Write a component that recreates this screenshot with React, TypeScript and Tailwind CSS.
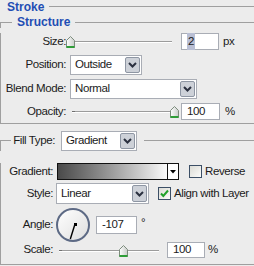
import React from 'react';

const font = { fontFamily: '"Liberation Sans", Arial, sans-serif' };

function Chevron() {
  return (
    <svg width="9" height="6" viewBox="0 0 9 6" fill="none">
      <polyline points="1,1 4.5,4.5 8,1" stroke="#2b3140" strokeWidth="2" />
    </svg>
  );
}

function Thumb() {
  return (
    <svg width="9" height="12" viewBox="0 0 9 12">
      <defs>
        <linearGradient id="thumbFill" x1="0" y1="0" x2="1" y2="0">
          <stop offset="0" stopColor="#ffffff" />
          <stop offset="1" stopColor="#c9cdc9" />
        </linearGradient>
      </defs>
      <path d="M4.5 0.5 L8.5 4.5 V11.5 H0.5 V4.5 Z" fill="url(#thumbFill)" stroke="#7d8c7d" />
      <path d="M0.5 11 H8.5" stroke="#2f9e38" strokeWidth="2" />
    </svg>
  );
}

function Slider({ className, pct }: { className: string; pct: number }) {
  return (
    <div className={`relative h-full ${className}`}>
      <div className="absolute left-[2px] right-[2px] top-[8px] h-[2px] border-t border-t-[#9c9c9c] border-b border-b-white" />
      <div className="absolute left-[2px] top-[8px] h-[1px] w-[3px] bg-[#6f6f6f]" />
      <div className="absolute top-[3px] leading-none" style={{ left: `calc(${pct}% - 4px)` }}>
        <Thumb />
      </div>
    </div>
  );
}

function Field({ value, className, selected }: { value: string; className: string; selected?: boolean }) {
  return (
    <div className={`flex items-center border border-[#a9adb5] bg-white pl-[5px] ${className}`}>
      {selected ? <span className="bg-[#b9bfd4] px-[1px]">{value}</span> : value}
    </div>
  );
}

function Select({ value, className }: { value: string; className: string }) {
  return (
    <div className={`flex items-stretch border border-[#a9adb5] bg-white ${className}`}>
      <div className="flex flex-1 items-center pl-[4px]">{value}</div>
      <div className="m-[1px] flex w-[15px] items-center justify-center rounded-[2px] border border-[#8e96a3] bg-[#cdd1d8]">
        <Chevron />
      </div>
    </div>
  );
}

function Check({ checked }: { checked?: boolean }) {
  return (
    <div className="flex h-[13px] w-[13px] items-center justify-center border border-[#3c4f66] bg-gradient-to-br from-[#dcdcd6] to-[#fbfbf9]">
      {checked && (
        <svg width="9" height="9" viewBox="0 0 9 9" fill="none">
          <polyline points="1,4.5 3.3,7 8,1.5" stroke="#21a12a" strokeWidth="2" />
        </svg>
      )}
    </div>
  );
}

function Dial() {
  return (
    <div className="relative h-[34px] w-[34px] rounded-full border-2 border-[#5d6a85] bg-gradient-to-br from-[#ffffff] to-[#dedede]">
      <svg className="absolute left-0 top-0" width="30" height="30" viewBox="0 0 30 30">
        <line x1="17" y1="14" x2="12.3" y2="29" stroke="#000" strokeWidth="1.4" />
        <rect x="16" y="13" width="3" height="3" fill="#000" />
      </svg>
    </div>
  );
}

export default function App() {
  return (
    <div className="h-[266px] w-[254px] overflow-hidden bg-[#ececec] text-[11.5px] tracking-[-0.4px] text-[#1b1b1b]" style={font}>
      <div className="flex h-[13px] items-center pl-[7px]">
        <span className="text-[12px] font-bold tracking-normal text-[#1f4eb4]">Stroke</span>
        <div className="ml-[5px] flex-1 border-t border-[#9f9f9f]" />
      </div>

      <div className="mt-[3px] flex h-[12px] items-center">
        <div className="h-[6px] w-[12px] self-end border-l border-t border-[#9f9f9f]" />
        <span className="ml-[5px] text-[12px] font-bold tracking-normal text-[#1f4eb4]">Structure</span>
        <div className="ml-[5px] h-[6px] flex-1 self-end border-t border-[#9f9f9f]" />
      </div>
      <div className="border-b border-l border-[#9f9f9f] pb-[3px]">
        <div className="mt-[5px] flex h-[17px] items-center">
          <div className="w-[65px] text-right">Size:</div>
          <Slider className="ml-[4px] w-[104px]" pct={0} />
          <Field value="2" selected className="ml-[7px] h-[17px] w-[38px]" />
          <span className="ml-[4px]">px</span>
        </div>
        <div className="mt-[5px] flex h-[20px] items-center">
          <div className="w-[65px] text-right">Position:</div>
          <Select value="Outside" className="ml-[4px] h-[20px] w-[72px]" />
        </div>
        <div className="mt-[4px] flex h-[20px] items-center">
          <div className="w-[65px] text-right">Blend Mode:</div>
          <Select value="Normal" className="ml-[4px] h-[20px] w-[127px]" />
        </div>
        <div className="mt-[4px] flex h-[17px] items-center">
          <div className="w-[65px] text-right">Opacity:</div>
          <Slider className="ml-[4px] w-[104px]" pct={100} />
          <Field value="100" className="ml-[7px] h-[17px] w-[39px]" />
          <span className="ml-[5px]">%</span>
        </div>
      </div>

      <div className="mt-[7px] flex h-[20px] items-center">
        <div className="h-[11px] w-[11px] self-end border-l border-t border-[#9f9f9f]" />
        <div className="w-[44px] text-right">Fill Type:</div>
        <Select value="Gradient" className="ml-[6px] h-[20px] w-[76px]" />
        <div className="ml-[7px] h-[11px] flex-1 self-end border-t border-[#9f9f9f]" />
      </div>
      <div className="border-b border-l border-[#9f9f9f] pb-[6px]">
        <div className="mt-[12px] flex h-[17px] items-center">
          <div className="w-[52px] text-right">Gradient:</div>
          <div className="ml-[4px] flex h-[17px] w-[122px] border border-[#111]">
            <div className="flex-1 bg-gradient-to-r from-[#4a4a4a] to-[#fbfbfb]" />
            <div className="flex w-[11px] items-center justify-center border-l border-[#111] bg-white">
              <svg width="6" height="4" viewBox="0 0 6 4">
                <path d="M0 0 H6 L3 3.5 Z" fill="#000" />
              </svg>
            </div>
          </div>
          <div className="ml-[10px]">
            <Check />
          </div>
          <span className="ml-[3px]">Reverse</span>
        </div>
        <div className="mt-[3px] flex h-[21px] items-center">
          <div className="w-[52px] text-right">Style:</div>
          <Select value="Linear" className="ml-[3px] h-[21px] w-[93px]" />
          <div className="ml-[9px]">
            <Check checked />
          </div>
          <span className="ml-[3px]">Align with Layer</span>
        </div>
        <div className="mt-[4px] flex h-[34px] items-center">
          <div className="w-[52px] text-right">Angle:</div>
          <div className="ml-[3px]">
            <Dial />
          </div>
          <Field value="-107" className="ml-[6px] h-[18px] w-[41px]" />
          <span className="ml-[4px] mt-[6px] self-start">°</span>
        </div>
        <div className="flex h-[16px] items-center">
          <div className="w-[52px] text-right">Scale:</div>
          <Slider className="ml-[4px] w-[104px]" pct={63} />
          <Field value="100" className="ml-[6px] h-[16px] w-[38px]" />
          <span className="ml-[3px]">%</span>
        </div>
      </div>
    </div>
  );
}
